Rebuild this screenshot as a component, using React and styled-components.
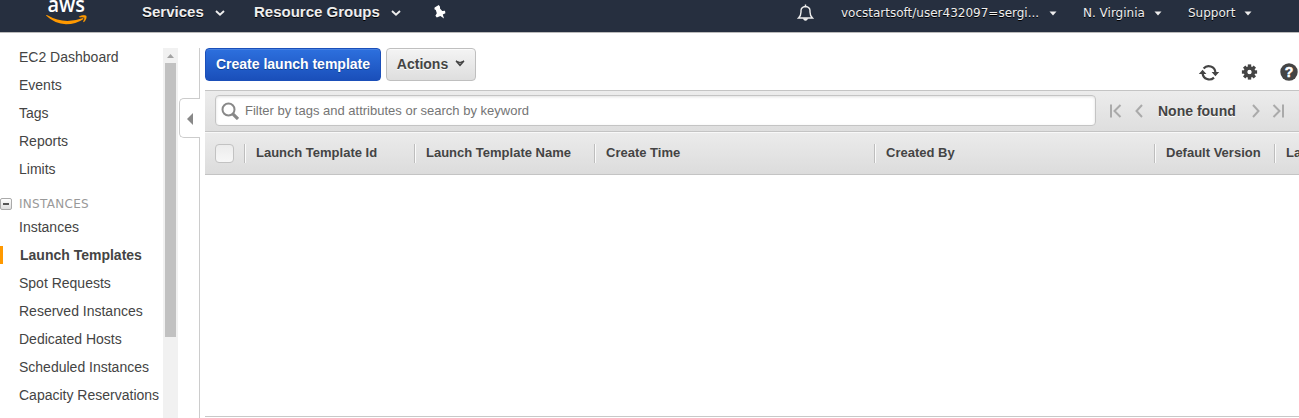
import React from "react";
import styled, { createGlobalStyle } from "styled-components";

const Global = createGlobalStyle`
  * { box-sizing: border-box; }
  html, body { margin: 0; height: 100%; overflow: hidden; background: #fff; }
  #root { height: 100%; }
  body { font-family: "Liberation Sans", Arial, sans-serif; font-size: 14px; color: #444; }
`;
const Page = styled.div`
  height: 418px; width: 1299px; display: flex; flex-direction: column; overflow: hidden;
`;
const TopBar = styled.header`
  height: 33px; flex: none; display: flex; align-items: flex-start;
  background: #262f3f; border-bottom: 1px solid #bbb; color: #eee;
`;
const Logo = styled.svg`
  flex: none; display: block; width: 42px; height: 26px; margin-left: 46px; overflow: hidden;
`;
const MainMenu = styled.button`
  display: flex; align-items: center; justify-content: space-between; width: ${p => p.$w}px; flex: none;
  margin: 0 0 0 ${p => p.$ml}px; padding: 0; height: 24px; border: 0; background: none;
  font: bold 15px/24px "Liberation Sans", Arial, sans-serif; color: #eee;
  text-shadow: 0 1px 0 #000; white-space: nowrap;
  svg { flex: none; margin-top: 2px; }
`;
const UserMenu = styled(MainMenu)`
  font: 12px/26px "DejaVu Sans", Verdana, sans-serif; height: 26px;
  svg { margin-top: 0; }
`;
const TopIcon = styled.svg`
  flex: none; display: block; margin: ${p => p.$mt}px 0 0 ${p => p.$ml}px;
`;
const Body = styled.div`
  flex: 1; display: flex; min-height: 0;
`;
const Sidebar = styled.nav`
  width: 163px; padding-top: 10px; flex: none; overflow: hidden; white-space: nowrap;
`;
const NavItem = styled.div`
  height: 28px; line-height: 28px; font-size: 14px; color: #444;
  padding-left: ${p => (p.$active ? 17 : 19)}px;
  ${p => p.$active && `
    height: 18px; line-height: 18px; margin: 5px 0; font-weight: bold; border-left: 3px solid #f90;
  `}
`;
const Section = styled.div`
  height: 19px; margin-top: 11px; display: flex; align-items: center; gap: 7px;
  font: 12px/20px "DejaVu Sans", Verdana, sans-serif; letter-spacing: 0.3px; color: #999;
`;
const Toggle = styled.span`
  width: 12px; height: 12px; margin-top: 1px; border: 1px solid #aaa; border-radius: 2px;
  background: linear-gradient(#fff, #ddd); display: flex; align-items: center; justify-content: center;
  &::after { content: ""; width: 6px; height: 2px; background: #555; }
`;
const Scrollbar = styled.div`
  width: 15px; margin-top: 15px; flex: none; background: #f1f1f1; display: flex;
  flex-direction: column; align-items: center;
`;
const ScrollArrow = styled.svg`
  display: block; width: 15px; height: 15px; flex: none;
`;
const Thumb = styled.div`
  width: 11px; height: 274px; background: #c1c1c1;
`;
const Splitter = styled.div`
  width: 22px; margin: 15px 0 0 0; flex: none; border-right: 1px solid #ccc; padding-top: 50px;
`;
const Collapse = styled.button`
  display: flex; align-items: center; justify-content: center; width: 21px; height: 40px; padding: 1px 0 0;
  margin: 0 -1px 0 1px; background: #fff; border: 1px solid #ccc; border-right: 0; border-radius: 5px 0 0 5px;
`;
const Content = styled.main`
  flex: 1; min-width: 0; margin-left: 5px; padding-top: 15px; display: flex; flex-direction: column;
  overflow: hidden;
`;
const Actions = styled.div`
  height: 42px; flex: none; display: flex; gap: 5px; align-items: flex-start;
`;
const Button = styled.button`
  height: 33px; width: ${p => p.$w}px; padding: 0 0 2px; display: flex; align-items: center; justify-content: center; gap: 7px;
  font: bold 14px "Liberation Sans", Arial, sans-serif; border-radius: 4px; white-space: nowrap;
  color: ${p => (p.$primary ? "#fff" : "#444")};
  border: 1px solid ${p => (p.$primary ? "#1b4fb9" : "#bfbfbf")};
  background: ${p => (p.$primary ? "linear-gradient(#2d70de, #1a4fba)" : "linear-gradient(#f4f4f4, #dedede)")};
  text-shadow: ${p => (p.$primary ? "0 1px 0 #104090" : "0 1px 0 #fff")};
  box-shadow: inset 0 1px 0 rgba(255,255,255,${p => (p.$primary ? 0.12 : 0.6)});
`;
const Tools = styled.div`
  margin: 14px 1px 0 auto; display: flex; align-items: center; height: 20px;
`;
const ToolIcon = styled.svg`
  display: block; flex: none; margin-left: ${p => p.$ml || 0}px;
`;
const FilterBar = styled.div`
  height: 42px; flex: none; display: flex; align-items: flex-start; padding: 4px 0 0 10px;
  border-top: 1px solid #c4c4c4; border-bottom: 1px solid #c4c4c4;
  background: linear-gradient(#ececec, #dedede);
`;
const Search = styled.div`
  width: 881px; height: 31px; flex: none; display: flex; align-items: center; padding-left: 5px; gap: 6px;
  background: #fff; border: 1px solid #c4c4c4; border-radius: 4px; color: #757575; font-size: 13px;
  box-shadow: inset 0 1px 3px rgba(0,0,0,.12);
`;
const Pager = styled.div`
  display: flex; align-items: center; height: 31px; margin-left: 13px;
`;
const PagerText = styled.span`
  font-weight: bold; width: 78px; margin: 0 16px 0 15px; text-shadow: 0 1px 0 #fff; white-space: nowrap;
`;
const HeaderRow = styled.div`
  height: 43px; flex: none; display: flex; align-items: center; padding-left: 10px;
  border-top: 1px solid #f8f8f8; border-bottom: 1px solid #c4c4c4;
  background: linear-gradient(#ebebeb, #dcdcdc); overflow: hidden;
`;
const Checkbox = styled.span`
  width: 19px; height: 19px; flex: none; margin-right: 10px; border: 1px solid #c2c2c2; border-radius: 4px;
  background: linear-gradient(#ececec, #f7f7f7);
`;
const HeadCell = styled.div`
  width: ${p => p.$w}px; height: 19px; flex: none; padding-left: 11px; line-height: 17px;
  border-left: 1px solid #bdbdbd; box-shadow: inset 1px 0 0 #fafafa;
  font-size: 13px; font-weight: bold; white-space: nowrap;
`;
const Results = styled.div`
  flex: 1; margin-bottom: 1px; border-bottom: 1px solid #c8c8c8;
`;

const Chevron = () => (
  <svg width="10" height="6" viewBox="0 0 10 6">
    <path d="M1 1 L5 4.7 L9 1" fill="none" stroke="#eee" strokeWidth="1.9" />
  </svg>
);
const Caret = () => (
  <svg width="8" height="5" viewBox="0 0 8 5"><path d="M0.5 0.5h7L4 4.5z" fill="#eee" /></svg>
);
const PageArrow = ({ flip, bar, ml }) => (
  <ToolIcon $ml={ml} width={bar ? 12 : 8} height="14" viewBox={bar ? "0 0 12 14" : "0 0 8 14"}>
    <g transform={flip ? `translate(${bar ? 12 : 8} 0) scale(-1 1)` : undefined} fill="none" stroke="#aaa" strokeWidth="2">
      {bar && <path d="M1 0.5v13" />}
      <path d={bar ? "M10.5 1L4.5 7l6 6" : "M7 1L1.5 7L7 13"} />
    </g>
  </ToolIcon>
);

const general = ["EC2 Dashboard", "Events", "Tags", "Reports", "Limits"];
const instances = ["Instances", "Launch Templates", "Spot Requests", "Reserved Instances", "Dedicated Hosts", "Scheduled Instances", "Capacity Reservations"];
const columns = [["Launch Template Id", 170], ["Launch Template Name", 180], ["Create Time", 280], ["Created By", 280], ["Default Version", 120], ["Latest Version", 120]];
const teeth = [0, 45, 90, 135, 180, 225, 270, 315];

export default function App() {
  return (
    <Page>
      <Global />
      <TopBar>
        <Logo viewBox="0 0 42 26">
          <text x="1.5" y="12.3" textLength="37.5" lengthAdjust="spacingAndGlyphs" fontFamily="Open Sans, sans-serif" fontWeight="600" fontSize="22" fill="#fff">aws</text>
          <path d="M0 15.6Q0.2 14.6 1.4 15.3Q18 25 36.2 18.2Q38 17.8 37.2 19.2Q30 24.2 20 24.2Q9 24.2 0 15.6Z" fill="#f90" />
          <path d="M33.3 16.4Q38 14.6 40.2 15.9Q41 18.5 37.9 22Q37.3 22.2 37.5 21.4Q39 18.3 38.3 17.5Q36.8 16.8 33.6 17.2Z" fill="#f90" stroke="#f90" strokeWidth="0.4" />
        </Logo>
        <MainMenu $ml={54} $w={83}>Services<Chevron /></MainMenu>
        <MainMenu $ml={29} $w={147}>Resource Groups<Chevron /></MainMenu>
        <TopIcon $ml={31} $mt={4} width="14" height="15" viewBox="0 0 14 15">
          <path d="M2.6 3.4L6.8 1L8 2.8L8 4.6L10.2 7L13 6.8L13.4 9.2L10.8 10.4L12 14.6L8.4 11.9L4.8 13.4L3.4 11.8L4.8 9.2L3.8 5.9L2.4 5.2Z" fill="#fff" />
        </TopIcon>
        <TopIcon $ml={351} $mt={4} width="17" height="18" viewBox="0 0 17 18">
          <path d="M1.5 14Q4 11.8 4 8V6.5Q4.2 3 8.5 2.5Q12.8 3 13 6.5V8Q13 11.8 15.5 14Z" fill="none" stroke="#eee" strokeWidth="1.4" />
          <path d="M8.5 0.5v2M7 15Q8.5 17 10 15Z" fill="#eee" stroke="#eee" strokeWidth="1.4" />
        </TopIcon>
        <UserMenu $ml={27} $w={216}>vocstartsoft/user432097=sergi...<Caret /></UserMenu>
        <UserMenu $ml={26} $w={79}>N. Virginia<Caret /></UserMenu>
        <UserMenu $ml={26} $w={64}>Support<Caret /></UserMenu>
      </TopBar>
      <Body>
        <Sidebar>
          {general.map(t => <NavItem key={t}>{t}</NavItem>)}
          <Section><Toggle />INSTANCES</Section>
          {instances.map(t => <NavItem key={t} $active={t === "Launch Templates"}>{t}</NavItem>)}
        </Sidebar>
        <Scrollbar>
          <ScrollArrow viewBox="0 0 15 15"><path d="M4 10L7.5 6L11 10z" fill="#a3a3a3" /></ScrollArrow>
          <Thumb />
        </Scrollbar>
        <Splitter>
          <Collapse aria-label="Collapse">
            <svg width="6" height="12" viewBox="0 0 6 12"><path d="M6 0v12L0 6z" fill="#888" /></svg>
          </Collapse>
        </Splitter>
        <Content>
          <Actions>
            <Button $primary $w={176}>Create launch template</Button>
            <Button $w={90}>Actions
              <svg width="10" height="7" viewBox="0 0 10 7"><path d="M1 1L5 5.5L9 1L5 2.5Z" fill="#999" stroke="#444" strokeWidth="1.2" /></svg>
            </Button>
            <Tools>
              <ToolIcon width="22" height="18" viewBox="0 -1 22 18">
                <path d="M5.6 4.4A6.8 6.8 0 0 1 17.4 8.5M16 13.6A6.8 6.8 0 0 1 4.6 9.5" fill="none" stroke="#444" strokeWidth="2.2" />
                <path d="M0.8 10L4.6 5.8L8.4 10zM13.6 8L21.2 8L17.4 12.2z" fill="#444" />
              </ToolIcon>
              <ToolIcon $ml={21} width="17" height="17" viewBox="-8.5 -8 17 17">
                {teeth.map(a => <rect key={a} x="-1.7" y="-7.6" width="3.4" height="5" fill="#444" transform={`rotate(${a})`} />)}
                <circle r="4" fill="none" stroke="#444" strokeWidth="3.6" />
              </ToolIcon>
              <ToolIcon $ml={22} width="18" height="18" viewBox="0 0 18 18">
                <circle cx="9" cy="9" r="8.7" fill="#444" />
                <text x="9" y="14" textAnchor="middle" fontFamily="Liberation Sans, sans-serif" fontSize="14" fontWeight="bold" fill="#fff" stroke="#fff" strokeWidth="0.5">?</text>
              </ToolIcon>
            </Tools>
          </Actions>
          <FilterBar>
            <Search>
              <svg width="18" height="18" viewBox="0 0 18 18">
                <circle cx="7.5" cy="7.5" r="6" fill="none" stroke="#888" strokeWidth="2" />
                <path d="M11.8 11.8L17 17" stroke="#888" strokeWidth="3.2" />
              </svg>
              Filter by tags and attributes or search by keyword
            </Search>
            <Pager>
              <PageArrow bar ml={1} />
              <PageArrow ml={13} />
              <PagerText>None found</PagerText>
              <PageArrow flip />
              <PageArrow flip bar ml={12} />
            </Pager>
          </FilterBar>
          <HeaderRow>
            <Checkbox />
            {columns.map(([t, w]) => <HeadCell key={t} $w={w}>{t}</HeadCell>)}
          </HeaderRow>
          <Results />
        </Content>
      </Body>
    </Page>
  );
}
